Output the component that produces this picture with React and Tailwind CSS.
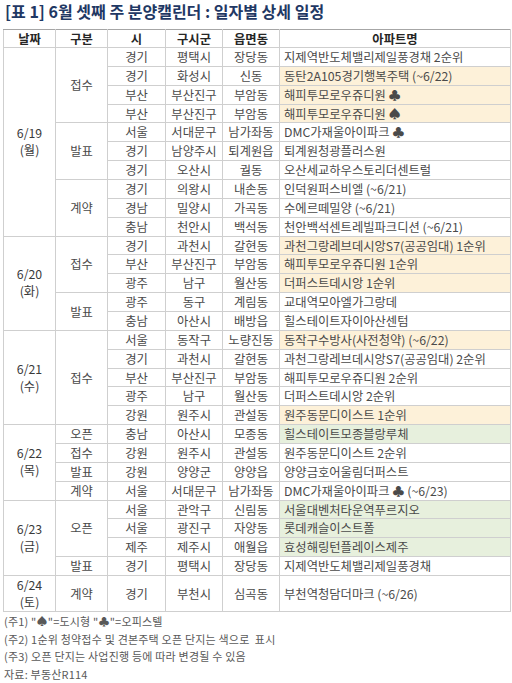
import React from "react";

const groups = [
  {
    date: "6/19",
    day: "(월)",
    sections: [
      {
        kind: "접수",
        rows: [
          ["경기", "평택시", "장당동", "지제역반도체밸리제일풍경채 2순위"],
          ["경기", "화성시", "신동", "동탄2A105경기행복주택 (~6/22)", "y"],
          ["부산", "부산진구", "부암동", "해피투모로우쥬디원 ♣", "y"],
          ["부산", "부산진구", "부암동", "해피투모로우쥬디원 ♠", "y"],
        ],
      },
      {
        kind: "발표",
        rows: [
          ["서울", "서대문구", "남가좌동", "DMC가재울아이파크 ♣"],
          ["경기", "남양주시", "퇴계원읍", "퇴계원청광플러스원"],
          ["경기", "오산시", "궐동", "오산세교하우스토리더센트럴"],
        ],
      },
      {
        kind: "계약",
        rows: [
          ["경기", "의왕시", "내손동", "인덕원퍼스비엘 (~6/21)"],
          ["경남", "밀양시", "가곡동", "수에르떼밀양 (~6/21)"],
          ["충남", "천안시", "백석동", "천안백석센트레빌파크디션 (~6/21)"],
        ],
      },
    ],
  },
  {
    date: "6/20",
    day: "(화)",
    sections: [
      {
        kind: "접수",
        rows: [
          ["경기", "과천시", "갈현동", "과천그랑레브데시앙S7(공공임대) 1순위", "y"],
          ["부산", "부산진구", "부암동", "해피투모로우쥬디원 1순위", "y"],
          ["광주", "남구", "월산동", "더퍼스트데시앙 1순위", "y"],
        ],
      },
      {
        kind: "발표",
        rows: [
          ["광주", "동구", "계림동", "교대역모아엘가그랑데"],
          ["충남", "아산시", "배방읍", "힐스테이트자이아산센텀"],
        ],
      },
    ],
  },
  {
    date: "6/21",
    day: "(수)",
    sections: [
      {
        kind: "접수",
        rows: [
          ["서울", "동작구", "노량진동", "동작구수방사(사전청약) (~6/22)", "y"],
          ["경기", "과천시", "갈현동", "과천그랑레브데시앙S7(공공임대) 2순위"],
          ["부산", "부산진구", "부암동", "해피투모로우쥬디원 2순위"],
          ["광주", "남구", "월산동", "더퍼스트데시앙 2순위"],
          ["강원", "원주시", "관설동", "원주동문디이스트 1순위", "y"],
        ],
      },
    ],
  },
  {
    date: "6/22",
    day: "(목)",
    sections: [
      { kind: "오픈", rows: [["충남", "아산시", "모종동", "힐스테이트모종블랑루체", "g"]] },
      { kind: "접수", rows: [["강원", "원주시", "관설동", "원주동문디이스트 2순위"]] },
      { kind: "발표", rows: [["강원", "양양군", "양양읍", "양양금호어울림더퍼스트"]] },
      { kind: "계약", rows: [["서울", "서대문구", "남가좌동", "DMC가재울아이파크 ♣ (~6/23)"]] },
    ],
  },
  {
    date: "6/23",
    day: "(금)",
    sections: [
      {
        kind: "오픈",
        rows: [
          ["서울", "관악구", "신림동", "서울대벤처타운역푸르지오", "g"],
          ["서울", "광진구", "자양동", "롯데캐슬이스트폴", "g"],
          ["제주", "제주시", "애월읍", "효성해링턴플레이스제주", "g"],
        ],
      },
      { kind: "발표", rows: [["경기", "평택시", "장당동", "지제역반도체밸리제일풍경채"]] },
    ],
  },
  {
    date: "6/24",
    day: "(토)",
    tall: true,
    sections: [{ kind: "계약", rows: [["경기", "부천시", "심곡동", "부천역청담더마크 (~6/26)"]] }],
  },
];

const bd = "border border-[#cfcfcf]";

export default function App() {
  const body = [];
  groups.forEach((g, gi) => {
    const total = g.sections.reduce((s, sec) => s + sec.rows.length, 0);
    let first = true;
    g.sections.forEach((sec, si) => {
      sec.rows.forEach((r, ri) => {
        const bg =
          r[4] === "y" ? "bg-[#fdf1d9]" : r[4] === "g" ? "bg-[#e7f0dd]" : "bg-white";
        body.push(
          <tr
            key={`${gi}-${si}-${ri}`}
            className={g.tall ? "h-[36px]" : "h-[18.86px]"}
          >
            {first && (
              <td rowSpan={total} className={`${bd} text-center text-[#3a3a3a] leading-[17px]`}>
                {g.date}
                <br />
                {g.day}
              </td>
            )}
            {ri === 0 && (
              <td rowSpan={sec.rows.length} className={`${bd} text-center text-[#4a4a4a]`}>
                {sec.kind}
              </td>
            )}
            <td className={`${bd} text-center text-[#4a4a4a]`}>{r[0]}</td>
            <td className={`${bd} text-center text-[#4a4a4a]`}>{r[1]}</td>
            <td className={`${bd} text-center text-[#4a4a4a] whitespace-nowrap`}>{r[2]}</td>
            <td className={`${bd} ${bg} pl-[4px] text-left text-[#4a4a4a] whitespace-nowrap`}>
              {r[3]}
            </td>
          </tr>
        );
        first = false;
      });
    });
  });

  return (
    <div className="w-[512px] h-[683px] bg-white font-['Noto_Sans_CJK_KR',sans-serif] overflow-hidden">
      <div className="h-[29px] pl-[5px] pt-[0px] text-[16px] leading-[22px] font-bold text-[#1f3864] whitespace-nowrap">
        [표 1] 6월 셋째 주 분양캘린더 : 일자별 상세 일정
      </div>
      <table className="ml-[3px] w-[507px] table-fixed border-collapse text-[12.3px] leading-[16px]">
        <colgroup>
          <col className="w-[52px]" />
          <col className="w-[52px]" />
          <col className="w-[58px]" />
          <col className="w-[57px]" />
          <col className="w-[57px]" />
          <col className="w-[231px]" />
        </colgroup>
        <thead>
          <tr className="h-[18px]">
            {["날짜", "구분", "시", "구시군", "읍면동", "아파트명"].map((h) => (
              <th
                key={h}
                className="border border-[#cfcfcf] border-t-[#a6a6a6] text-center font-bold text-[#262626] p-0"
              >
                {h}
              </th>
            ))}
          </tr>
        </thead>
        <tbody>{body}</tbody>
      </table>
      <div className="pl-[4px] pt-[1px] text-[11px] leading-[17.6px] tracking-[0.2px] text-[#595959]">
        <div>(주1) "♠"=도시형 "♣"=오피스텔</div>
        <div className="whitespace-pre">(주2) 1순위 청약접수 및 견본주택 오픈 단지는 색으로  표시</div>
        <div>(주3) 오픈 단지는 사업진행 등에 따라 변경될 수 있음</div>
        <div>자료: 부동산R114</div>
      </div>
    </div>
  );
}
